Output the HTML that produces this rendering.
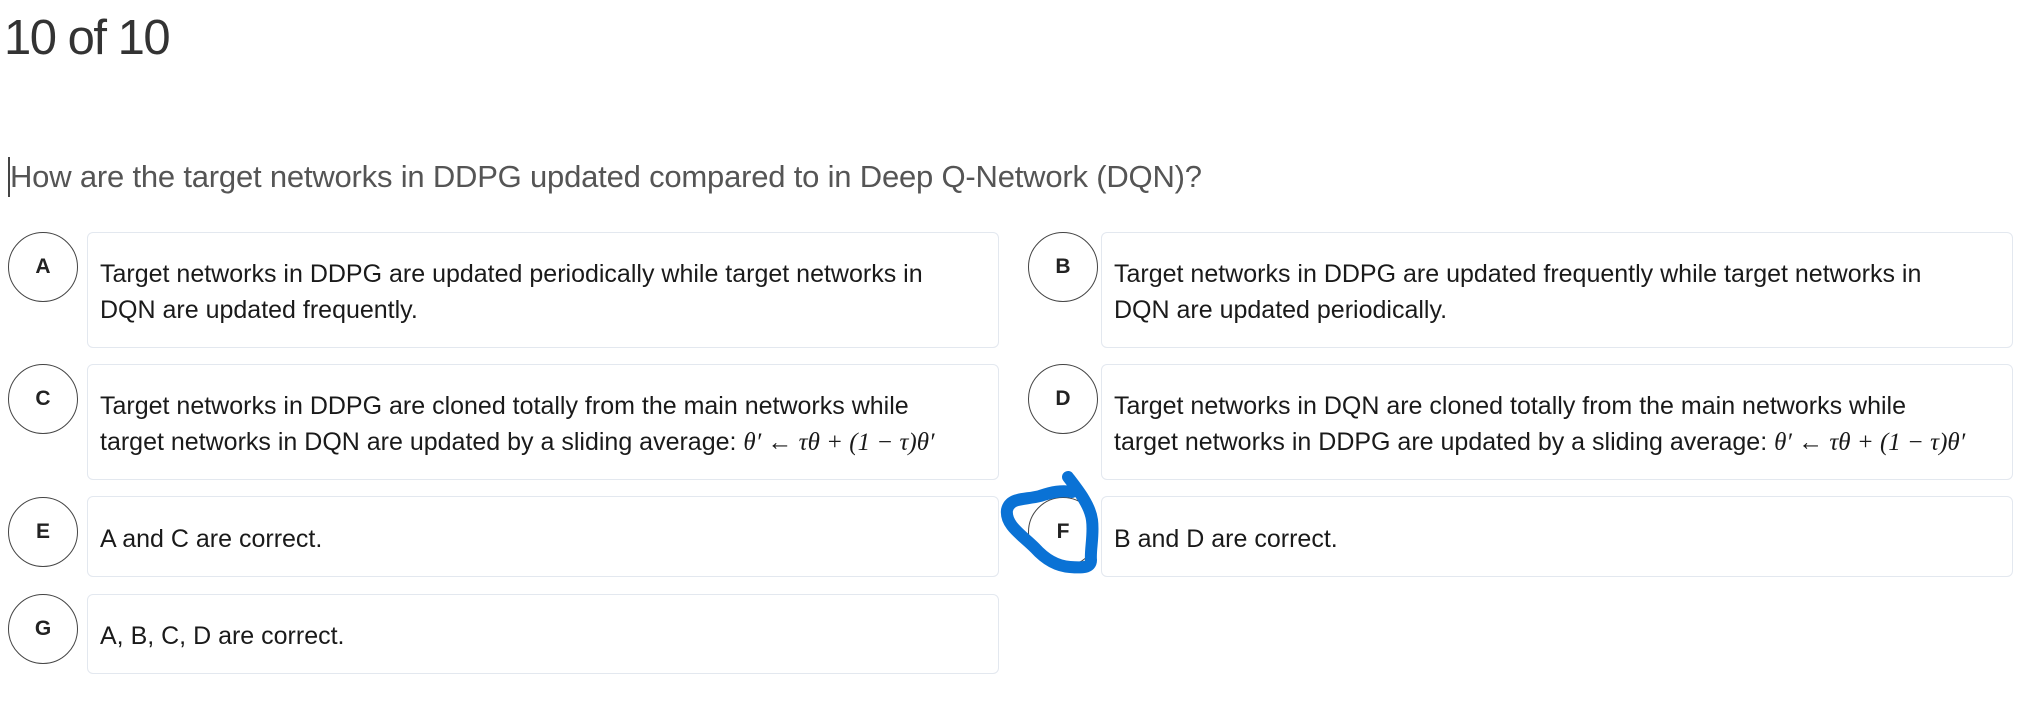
<!DOCTYPE html>
<html><head><meta charset="utf-8"><style>
body{margin:0;width:2038px;height:722px;background:#fff;font-family:"Liberation Sans",sans-serif;position:relative;overflow:hidden;color:#222}
.t{position:absolute;left:4px;top:10px;font-size:49px;color:#333;letter-spacing:-1.5px}
.q{position:absolute;left:10px;top:159px;font-size:31px;color:#555;letter-spacing:-0.2px}
.cur{position:absolute;left:8px;top:157px;width:2px;height:40px;background:#444}
.c{position:absolute;width:68px;height:68px;border:1.5px solid #444;border-radius:50%;display:flex;align-items:center;justify-content:center;font-weight:bold;font-size:21px;color:#222;background:#fff}
.b{position:absolute;border:1.5px solid #e3e8ef;border-radius:6px;display:flex;align-items:center;padding:4px 12px 0;box-sizing:border-box;font-size:25px;line-height:36px;color:#1a1a1a}
.m{font-family:"Liberation Serif",serif;font-style:italic}
</style></head><body>
<div class="t">10 of 10</div>
<div class="cur"></div>
<div class="q">How are the target networks in DDPG updated compared to in Deep Q-Network (DQN)?</div>

<div class="c" style="left:8px;top:232px">A</div>
<div class="b" style="left:87px;top:232px;width:912px;height:116px">Target networks in DDPG are updated periodically while target networks in<br>DQN are updated frequently.</div>
<div class="c" style="left:1028px;top:232px">B</div>
<div class="b" style="left:1101px;top:232px;width:912px;height:116px">Target networks in DDPG are updated frequently while target networks in<br>DQN are updated periodically.</div>

<div class="c" style="left:8px;top:364px">C</div>
<div class="b" style="left:87px;top:364px;width:912px;height:116px"><span>Target networks in DDPG are cloned totally from the main networks while<br>target networks in DQN are updated by a sliding average: <span class="m">θ′ ← τθ + (1 − τ)θ′</span></span></div>
<div class="c" style="left:1028px;top:364px">D</div>
<div class="b" style="left:1101px;top:364px;width:912px;height:116px"><span>Target networks in DQN are cloned totally from the main networks while<br>target networks in DDPG are updated by a sliding average: <span class="m">θ′ ← τθ + (1 − τ)θ′</span></span></div>

<div class="c" style="left:8px;top:497px">E</div>
<div class="b" style="left:87px;top:496px;width:912px;height:81px">A and C are correct.</div>
<div class="c" style="left:1028px;top:497px">F</div>
<div class="b" style="left:1101px;top:496px;width:912px;height:81px">B and D are correct.</div>

<div class="c" style="left:8px;top:594px">G</div>
<div class="b" style="left:87px;top:594px;width:912px;height:80px">A, B, C, D are correct.</div>

<svg style="position:absolute;left:0;top:0" width="2038" height="722">
<path d="M1068 477 C1078 490,1090 505,1092 520 C1094 535,1090 550,1091 560 C1091 568,1082 568,1070 567 C1055 566,1044 558,1035 548 C1022 535,1005 525,1007 510 C1010 497,1025 500,1040 496 C1052 492,1062 490,1072 492" fill="none" stroke="#0a72d5" stroke-width="12" stroke-linecap="round"/>
</svg>
</body></html>
